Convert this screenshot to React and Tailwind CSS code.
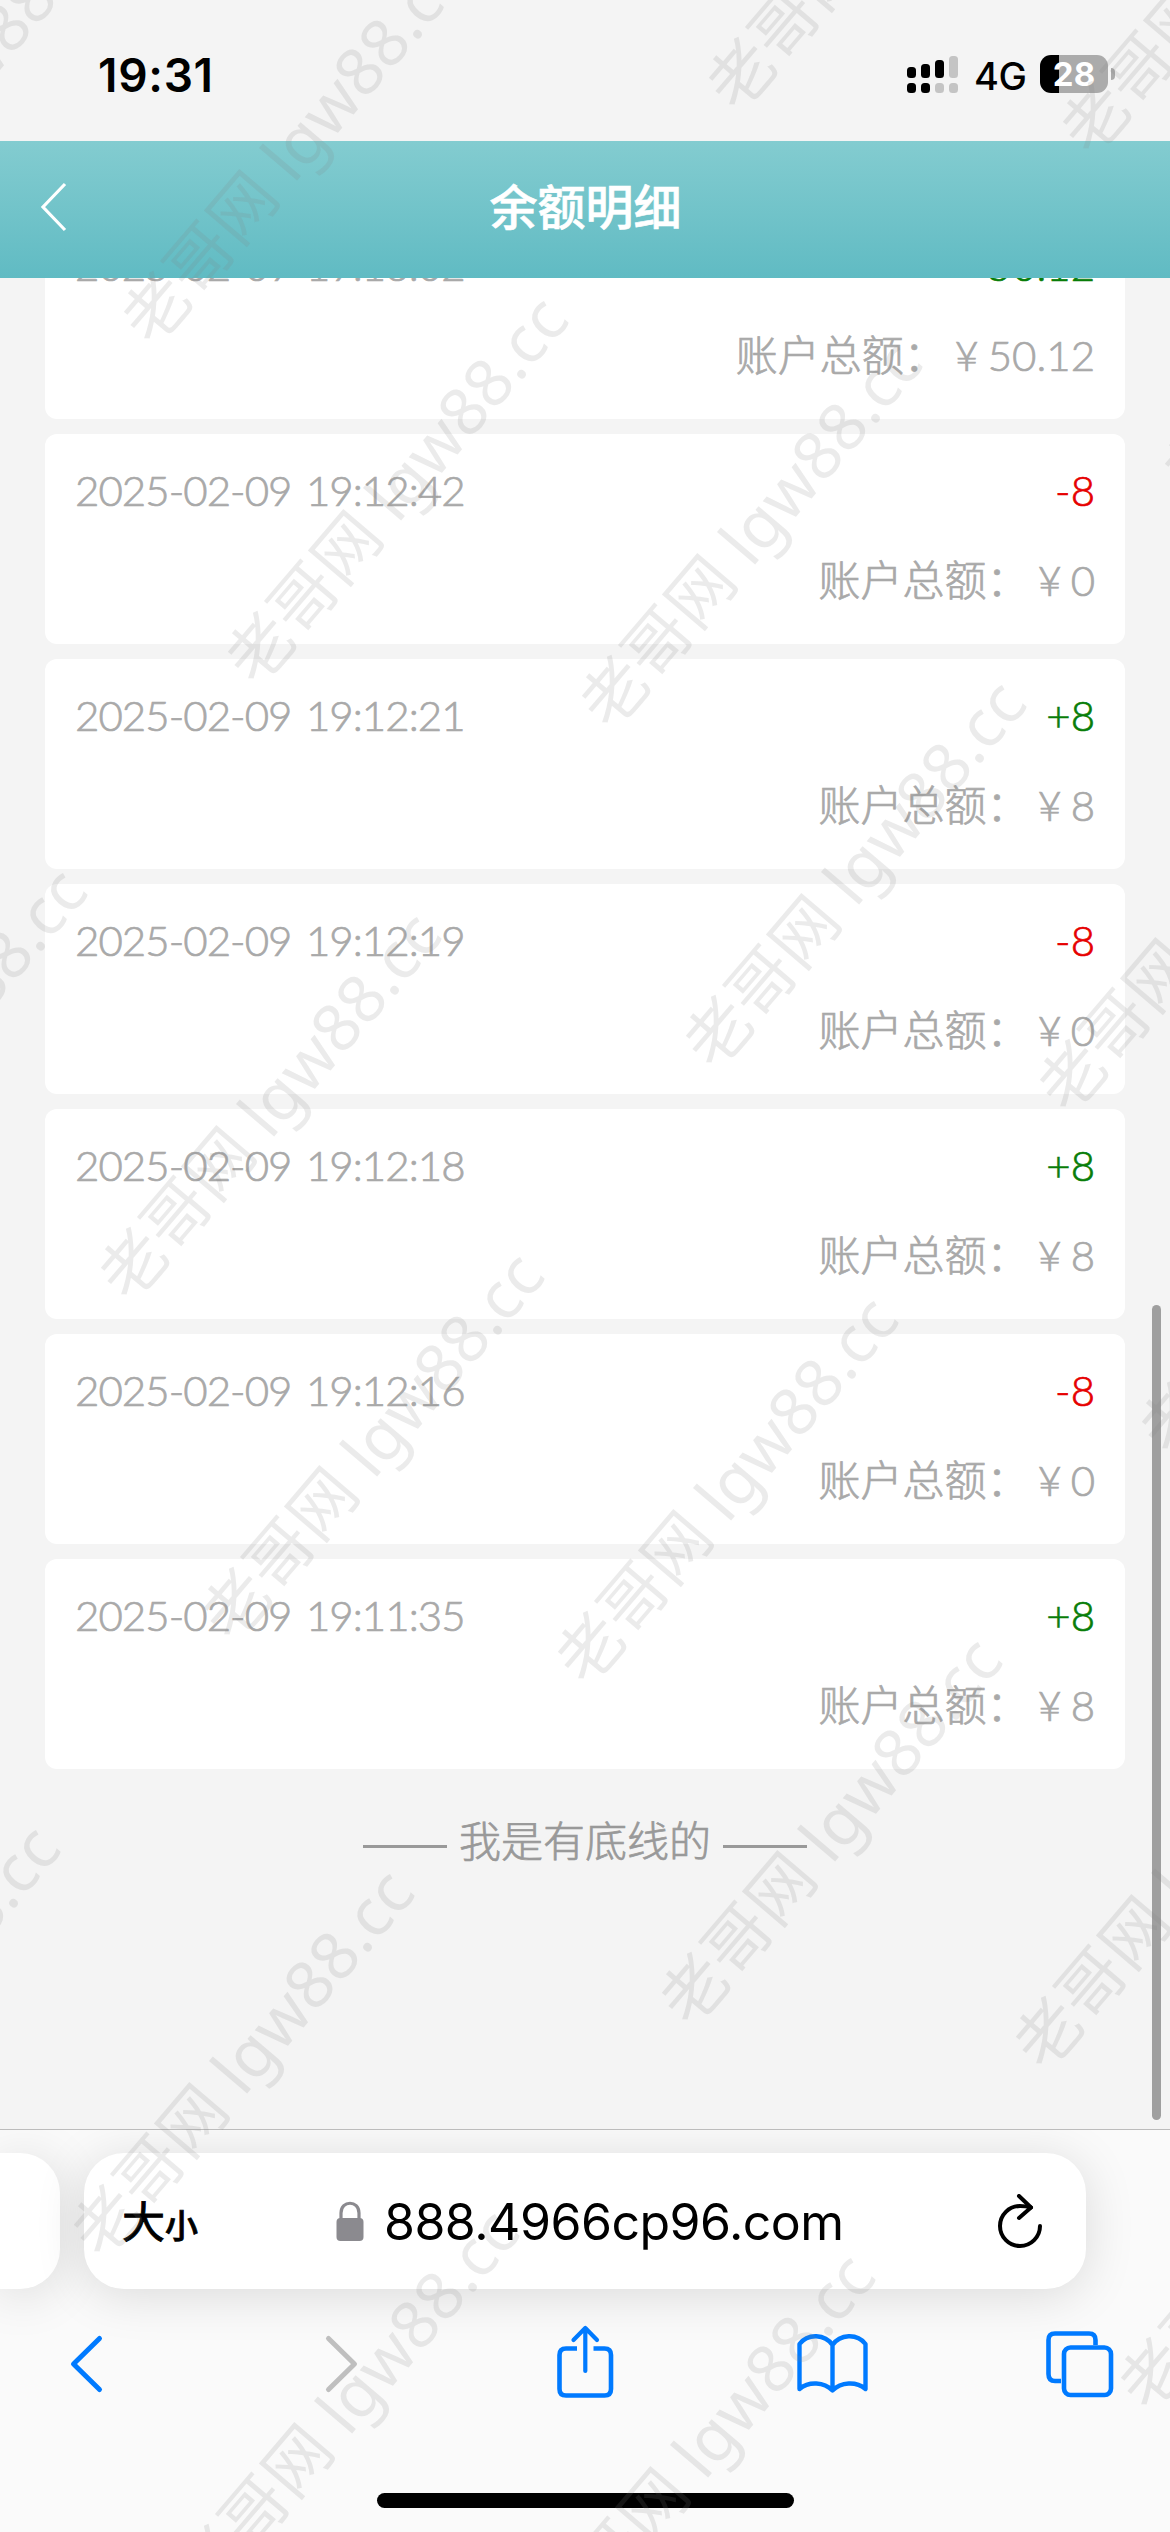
import React from 'react';

const RECORDS = [
    { time: '2025-02-09 19:13:02', amount: '+50.12', total: '50.12' },
    { time: '2025-02-09 19:12:42', amount: '-8', total: '0' },
    { time: '2025-02-09 19:12:21', amount: '+8', total: '8' },
    { time: '2025-02-09 19:12:19', amount: '-8', total: '0' },
    { time: '2025-02-09 19:12:18', amount: '+8', total: '8' },
    { time: '2025-02-09 19:12:16', amount: '-8', total: '0' },
    { time: '2025-02-09 19:11:35', amount: '+8', total: '8' },
];

// center of the first glyph of every watermark
const MARKS = [
    [-197, 263], [157, 307], [742, 73], [1096, 117], [1198, 459],
    [261, 647], [615, 691], [719, 1031], [1073, 1075], [1175, 1417],
    [-220, 1219], [134, 1263], [237, 1603], [591, 1647],
    [695, 1988], [1049, 2032], [1154, 2373],
    [-247, 2176], [107, 2220], [212, 2560], [568, 2604],
];

function StatusBar() {
    return (
        <div className="h-[141px] shrink-0 flex items-start justify-between pl-[98px] pr-[55px] pt-[55px] text-black">
            <span className="mt-[-4px] font-['Inter',sans-serif] font-semibold text-[46px] leading-[48px] tracking-[0.7px]">19:31</span>
            <div className="flex items-start">
                <svg width="52" height="38" viewBox="0 0 52 38">
                    <rect x="0" y="12" width="9" height="11" rx="3.5" />
                    <rect x="14" y="9" width="9" height="14" rx="3.5" />
                    <rect x="28" y="5" width="9" height="18" rx="3.5" />
                    <rect x="42" y="1" width="9" height="22" rx="3.5" fill="#c4c4c4" />
                    <rect x="0" y="28" width="9" height="10" rx="3.5" />
                    <rect x="14" y="28" width="9" height="10" rx="3.5" />
                    <rect x="28" y="28" width="9" height="10" rx="3.5" fill="#c4c4c4" />
                    <rect x="42" y="28" width="9" height="10" rx="3.5" fill="#c4c4c4" />
                </svg>
                <span className="ml-[15px] mt-[2px] w-[66px] font-['Inter',sans-serif] font-medium text-[38px] leading-[38px] tracking-[-0.5px]">4G</span>
                <div className="w-[68px] h-[38px] rounded-[11px] bg-linear-to-r from-black from-28% to-[#ababab] to-28% flex items-center justify-center">
                    <span className="font-['Inter',sans-serif] font-bold text-[33px] leading-[38px] text-white">28</span>
                </div>
                <div className="w-[4px] h-[12px] mt-[13px] ml-[3px] rounded-r-full bg-[#ababab]" />
            </div>
        </div>
    );
}

function Header() {
    return (
        <div className="h-[137px] shrink-0 flex items-center pb-[5px] bg-linear-to-b from-[#83ccd0] to-[#60bbc3] relative z-10">
            <svg className="ml-[38px]" width="30" height="50" viewBox="0 0 30 50" fill="none" stroke="#fff" strokeWidth="3.2">
                <path d="M27 2 L5 25 L27 48" />
            </svg>
            <h1 className="flex-1 mr-[67px] text-center text-white font-medium text-[48px] leading-[70px] [-webkit-text-stroke:0.6px]">余额明细</h1>
        </div>
    );
}

function RecordCard({ time, amount, total }) {
    return (
        <div className="h-[210px] shrink-0 rounded-[12px] bg-white px-[30px] pt-[11px] text-[42px] leading-[90px] font-light text-[#a9a9a9] [-webkit-text-stroke:0.7px]">
            <div className="h-[90px] flex justify-between">
                <span className="tracking-[-0.95px] [word-spacing:4px]">{time}</span>
                <span className={amount.startsWith('+') ? 'text-[#087d08]' : 'text-[#e60000]'}>{amount}</span>
            </div>
            <div className="h-[90px] flex justify-end">
                <span>账户总额：</span>
                <span className="w-[42px] text-center">¥</span>
                <span>{total}</span>
            </div>
        </div>
    );
}

function BrowserBar() {
    return (
        <div className="h-[403px] shrink-0 border-t border-[#bcbcbc] bg-[#fafafa] flex flex-col overflow-hidden">
            <div className="mt-[23px] h-[136px] flex gap-[24px]">
                <div className="w-[60px] rounded-r-[40px] bg-white shadow-[0_6px_50px_rgba(0,0,0,0.13)]" />
                <div className="w-[1002px] rounded-[40px] bg-white shadow-[0_6px_50px_rgba(0,0,0,0.13)] flex items-center text-black">
                    <div className="ml-[38px] mt-[5px] w-[214px] flex items-baseline">
                        <span className="text-[43px] leading-[60px] font-normal [-webkit-text-stroke:0.9px]">大</span>
                        <span className="text-[33px] leading-[60px] font-medium [-webkit-text-stroke:0.8px]">小</span>
                    </div>
                    <svg className="mt-[-1px]" width="28" height="40" viewBox="0 0 28 40">
                        <path d="M5 19 V12 C5 -1 23 -1 23 12 V19" fill="none" stroke="#8b8a8f" strokeWidth="3.2" />
                        <rect x="0.5" y="17" width="27" height="23" rx="4" fill="#8b8a8f" />
                    </svg>
                    <span className="ml-[20px] mt-[2px] w-[612px] font-['Inter',sans-serif] text-[50px] leading-[60px] tracking-[-0.5px]">888.4966cp96.com</span>
                    <svg width="48" height="54" viewBox="996 2192 48 54" fill="none" stroke="#000" strokeWidth="4" strokeLinecap="round" strokeLinejoin="round">
                        <path d="M1040 2224 A20 20 0 1 1 1020 2204 Q1026 2204 1031 2205.500" />
                        <path d="M1019 2194 L1031 2205.500 L1019 2216" />
                    </svg>
                </div>
            </div>
            <svg className="mt-[30px] shrink-0" width="1170" height="90" viewBox="0 2319 1170 90" fill="none" stroke="#007aff" strokeWidth="4.600" strokeLinecap="round" strokeLinejoin="round">
                <path d="M99.500 2338.500 L73.500 2364 L99.500 2389.500" strokeWidth="5" />
                <path d="M328.500 2338.500 L354.500 2364 L328.500 2389.500" stroke="#bfbfbf" strokeWidth="5" />
                <path d="M577 2348.500 H566 Q559.500 2348.500 559.500 2355 V2389 Q559.500 2395.500 566 2395.500 H604.500 Q611 2395.500 611 2389 V2355 Q611 2348.500 604.500 2348.500 H593.500" strokeLinecap="butt" />
                <path d="M585.300 2371 V2328 M573.500 2340 L585.300 2328 L597 2340" strokeWidth="4.200" />
                <path d="M832.500 2345 C825 2334 808 2333 799.500 2344 V2389 C809 2381 824 2382 832.500 2390.500 C841 2382 856 2381 865.500 2389 V2344 C857 2333 840 2334 832.500 2345 Z M832.500 2345 V2390" strokeWidth="4.400" />
                <path d="M1061 2381 H1055 Q1048.500 2381 1048.500 2374 V2340 Q1048.500 2333.500 1055 2333.500 H1089 Q1095.500 2333.500 1095.500 2340 V2345" strokeLinecap="butt" />
                <rect x="1064" y="2347.500" width="47" height="47.500" rx="6.500" />
            </svg>
            <div className="mt-[84px] mx-auto w-[417px] h-[15px] shrink-0 rounded-full bg-black" />
        </div>
    );
}

export default function App() {
    return (
        <div className="relative w-[1170px] h-[2532px] overflow-hidden flex flex-col bg-[#f4f4f4] font-['Lato','Noto_Sans_CJK_SC',sans-serif]">
            <StatusBar />
            <Header />
            <div className="h-[1851px] shrink-0 overflow-hidden flex">
                <div className="flex-1 ml-[45px] mt-[-69px] flex flex-col gap-[15px]">
                    {RECORDS.map((record) => (
                        <RecordCard key={record.time} {...record} />
                    ))}
                    <div className="mt-[27px] h-[60px] flex items-center justify-center gap-[12px] text-[42px] leading-[60px] text-[#999999]">
                        <span className="w-[84px] h-[3px] mt-[10px] bg-[#999999]" />
                        <span className="font-light [-webkit-text-stroke:0.7px]">我是有底线的</span>
                        <span className="w-[84px] h-[3px] mt-[10px] bg-[#999999]" />
                    </div>
                </div>
                <div className="ml-[27px] mr-[9px] mt-[1027px] w-[9px] h-[815px] rounded-full bg-[#9f9f9f]" />
            </div>
            <BrowserBar />

            <div className="absolute inset-0 z-20 overflow-hidden pointer-events-none">
                {MARKS.map(([x, y]) => (
                    <span
                        key={`${x},${y}`}
                        className="absolute -ml-[33px] -mt-[50px] origin-[33px_50px] rotate-[-49.5deg] whitespace-nowrap font-['Noto_Sans','Noto_Sans_CJK_SC',sans-serif] text-[66px] leading-[100px] tracking-[0.2px] text-[#808080]/16"
                        style={{ left: x - 2, top: y }}
                    >
                        老哥网 lgw88.cc
                    </span>
                ))}
            </div>
        </div>
    );
}
